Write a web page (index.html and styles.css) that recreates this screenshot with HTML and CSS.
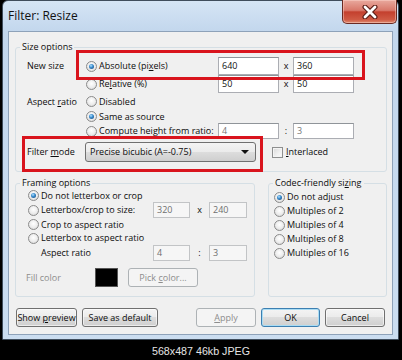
FILE: index.html
```html
<!DOCTYPE html>
<html>
<head>
<meta charset="utf-8">
<title>Filter: Resize</title>
<link rel="stylesheet" href="styles.css">
</head>
<body>
<div class="window">
  <div class="titlebar">
    <span class="title">Filter: Resize</span>
    <div class="close">
      <svg width="22" height="14" viewBox="0 0 22 14">
        <path d="M6 2 L16 12 M16 2 L6 12" stroke="#5a1c15" stroke-width="5" stroke-linecap="round"/>
        <path d="M6 2 L16 12 M16 2 L6 12" stroke="#ffffff" stroke-width="2.8" stroke-linecap="round"/>
      </svg>
    </div>
  </div>
  <div class="client">
    <fieldset class="group size-group">
      <legend>Size options</legend>
      <div class="size-grid">
        <span class="lbl c1">New size</span>
        <label class="opt c2"><i class="radio on"></i><span>Absolute (pi<u>x</u>els)</span></label>
        <span class="field c3">640</span><span class="sep c4">x</span><span class="field c5">360</span>
        <label class="opt c2"><i class="radio"></i><span>Re<u>l</u>ative (%)</span></label>
        <span class="field c3">50</span><span class="sep c4">x</span><span class="field c5">50</span>
        <span class="lbl c1">Aspect <u>r</u>atio</span>
        <label class="opt c2"><i class="radio"></i><span>Disabled</span></label>
        <label class="opt c2"><i class="radio on"></i><span>Same as source</span></label>
        <label class="opt c2"><i class="radio"></i><span>Compute height from ratio:</span></label>
        <span class="field fld-grey c3">4</span><span class="sep c4">:</span><span class="field fld-grey c5">3</span>
      </div>
      <div class="filter-row">
        <span class="lbl filter-lbl">Filter <u>m</u>ode</span>
        <div class="combo"><span>Precise bicubic (A=-0.75)</span><i class="arrow"></i></div>
        <label class="check-opt"><i class="checkbox"></i><span><u>I</u>nterlaced</span></label>
      </div>
    </fieldset>

    <div class="lower">
      <fieldset class="group framing">
        <legend>Framing options</legend>
        <div class="framing-grid">
          <label class="opt f12"><i class="radio on"></i><span>Do not letterbox or crop</span></label>
          <label class="opt f12"><i class="radio"></i><span>Letterbox/crop to size:</span></label>
          <span class="field dis c3">320</span><span class="sep c4">x</span><span class="field dis c5">240</span>
          <label class="opt f12"><i class="radio"></i><span>Crop to aspect ratio</span></label>
          <label class="opt f12"><i class="radio"></i><span>Letterbox to aspect ratio</span></label>
          <span class="lbl c2">Aspect ratio</span>
          <span class="field dis c3">4</span><span class="sep c4">:</span><span class="field dis c5">3</span>
        </div>
        <div class="fill-row">
          <span class="fill-lbl">Fill color</span>
          <span class="swatch"></span>
          <span class="btn btn-dis pick"><span>Pick <u>c</u>olor...</span></span>
        </div>
      </fieldset>
      <fieldset class="group codec">
        <legend>Codec-friendly si<u>z</u>ing</legend>
        <div class="codec-list">
          <label class="opt"><i class="radio on"></i><span>Do not adjust</span></label>
          <label class="opt"><i class="radio"></i><span>Multiples of 2</span></label>
          <label class="opt"><i class="radio"></i><span>Multiples of 4</span></label>
          <label class="opt"><i class="radio"></i><span>Multiples of 8</span></label>
          <label class="opt"><i class="radio"></i><span>Multiples of 16</span></label>
        </div>
      </fieldset>
    </div>

    <div class="buttons">
      <span class="btn w61"><span>Show <u>p</u>review</span></span>
      <span class="btn w76"><span>Save as default</span></span>
      <span class="btn btn-dis w60 push"><span><u>A</u>pply</span></span>
      <span class="btn btn-default w59"><span>OK</span></span>
      <span class="btn w60"><span>Cancel</span></span>
    </div>
  </div>
  <div class="mark mark-size"></div>
  <div class="mark mark-filter"></div>
</div>
<div class="caption">568x487 46kb JPEG</div>
</body>
</html>
```

FILE: styles.css
```css
* { box-sizing: border-box; }
html, body { margin: 0; padding: 0; }
body {
  width: 402px;
  height: 360px;
  overflow: hidden;
  background: #000;
  font-family: "Open Sans", "Noto Sans", sans-serif;
  font-size: 9px;
  line-height: 12px;
  color: #0c0c0c;
}
u { text-decoration: underline; text-underline-offset: 1px; text-decoration-thickness: 1px; }

.window {
  position: relative;
  margin-left: 2px;
  width: 397px;
  height: 340px;
  padding: 0 5px 4px;
  border: 1px solid #3f4d5c;
  border-radius: 6px 6px 0 0;
  background: linear-gradient(180deg, #d5e5f5 0px, #c3d7ed 30px, #c7daef 60%, #cbddf0 100%);
  display: flex;
  flex-direction: column;
}

.titlebar {
  height: 30px;
  display: flex;
  align-items: center;
}
.title {
  font-size: 12px;
  line-height: 16px;
  color: #111;
}
.close {
  margin-left: auto;
  margin-right: -4px;
  align-self: flex-start;
  margin-top: -1px;
  width: 55px;
  height: 24px;
  border: 1px solid #6a2a22;
  border-top: none;
  border-radius: 0 0 5px 5px;
  background: linear-gradient(180deg, #e9a99e 0%, #d8786a 45%, #c4402e 52%, #cf5a44 85%, #de8a6e 100%);
  box-shadow: inset 0 0 0 1px rgba(255, 220, 210, 0.45);
  display: flex;
  align-items: center;
  justify-content: center;
}

.client {
  flex: 1;
  background: #f0f0f0;
  border: 1px solid #8ea2b9;
  display: flex;
  flex-direction: column;
}

.group {
  margin: 0;
  padding: 0;
  min-width: 0;
  border: 1px solid #d5dfe5;
  border-radius: 3px;
}
.group legend {
  padding: 0 2px;
  margin-left: 4px;
  font-size: 9px;
  line-height: 12px;
}

.size-group { margin: 9px 5px 0 6px; }

.size-grid {
  padding: 4px 0 0 11px;
  display: grid;
  grid-template-columns: 59px 132px 61px 14px 61px;
  grid-template-rows: 18px 18px 17px 13px 16px;
  align-items: center;
}
.c1 { grid-column: 1; }
.c2 { grid-column: 2; }
.c3 { grid-column: 3; }
.c4 { grid-column: 4; }
.c5 { grid-column: 5; }
.f12 { grid-column: 1 / 3; }

.lbl { white-space: nowrap; }
.opt {
  display: flex;
  align-items: center;
  gap: 2px;
  white-space: nowrap;
}
.radio {
  position: relative;
  flex: none;
  width: 11px;
  height: 11px;
  border-radius: 50%;
  border: 1px solid #8b8b8b;
  background: radial-gradient(circle at 50% 40%, #ffffff 0%, #ececec 55%, #cdcdcd 100%);
}
.radio.on::after {
  content: "";
  position: absolute;
  left: 2px;
  top: 2px;
  width: 5px;
  height: 5px;
  border-radius: 50%;
  background: radial-gradient(circle at 40% 35%, #b7e3ff 0%, #3d8fd0 40%, #123e6e 100%);
}

.field {
  height: 100%;
  border: 1px solid #abadb3;
  border-top-color: #8f9499;
  background: #fff;
  padding: 0 3px;
  display: flex;
  align-items: center;
  color: #111;
}
.fld-grey { color: #777; }
.field.dis {
  background: #f6f6f6;
  border-color: #c2c4c6;
  color: #6f6f6f;
}
.sep { text-align: center; }

.filter-row {
  margin-top: 3px;
  padding: 0 0 9px 11px;
  display: flex;
  align-items: center;
}
.filter-lbl { width: 58px; }
.combo {
  width: 171px;
  height: 20px;
  border: 1px solid #707070;
  border-radius: 3px;
  background: linear-gradient(180deg, #f4f4f4 0%, #ebebeb 50%, #dddddd 50%, #cfcfcf 100%);
  display: flex;
  align-items: center;
  justify-content: space-between;
  padding: 0 6px 0 4px;
}
.arrow {
  width: 0;
  height: 0;
  border-left: 4px solid transparent;
  border-right: 4px solid transparent;
  border-top: 4px solid #111;
}
.check-opt {
  margin-left: 16px;
  display: flex;
  align-items: center;
  gap: 3px;
}
.checkbox {
  width: 11px;
  height: 11px;
  border: 1px solid #8e8f8f;
  background: linear-gradient(135deg, #d9d9d9 0%, #f1f1f1 60%, #fbfbfb 100%);
  box-shadow: inset 0 0 0 1px #f4f4f4;
}

.lower {
  margin: 5px 5px 0 6px;
  display: flex;
  gap: 13px;
}
.framing { width: 240px; }
.codec { flex: 1; }

.framing-grid {
  padding: 0 0 0 12px;
  display: grid;
  grid-template-columns: 13px 112px 37px 19px 38px;
  grid-template-rows: 13px 16px 13px 14px 16px;
  align-items: center;
}
.fill-row {
  margin: 7px 0 0 10px;
  padding-bottom: 9px;
  display: flex;
  align-items: center;
}
.fill-lbl { width: 69px; color: #8d8d8d; }
.swatch {
  width: 23px;
  height: 19px;
  background: #000;
  border: 1px solid #555;
  margin-right: 10px;
}
.pick { width: 70px; height: 18px; }

.codec-list {
  padding: 1px 0 0 5px;
  display: flex;
  flex-direction: column;
}
.codec-list .opt { height: 14px; }

.buttons {
  margin-top: 11px;
  padding: 0 7px;
  display: flex;
  gap: 5px;
  height: 19px;
}
.btn {
  height: 19px;
  border: 1px solid #707070;
  border-radius: 3px;
  background: linear-gradient(180deg, #f4f4f4 0%, #ebebeb 50%, #dddddd 50%, #cfcfcf 100%);
  box-shadow: inset 0 0 0 1px rgba(255, 255, 255, 0.6);
  display: flex;
  align-items: center;
  justify-content: center;
  white-space: nowrap;
}
.btn-dis {
  border-color: #adb2b5;
  background: #f4f4f4;
  color: #8d8d8d;
  box-shadow: none;
}
.btn-default {
  border-color: #3c7fb1;
  box-shadow: inset 0 0 0 1px #a9dcf4;
}
.push { margin-left: auto; }
.w59 { width: 59px; }
.w60 { width: 60px; }
.w61 { width: 61px; }
.w76 { width: 76px; }

.mark {
  position: absolute;
  border: 3px solid #d9141d;
}
.mark-size { left: 73px; top: 49px; width: 289px; height: 30px; }
.mark-filter { left: 19px; top: 135px; width: 241px; height: 36px; }

.caption {
  width: 402px;
  padding-top: 5px;
  text-align: center;
  font-family: "Liberation Sans", Arial, sans-serif;
  font-size: 10.7px;
  line-height: 13px;
  color: #e4e4e4;
}
```
